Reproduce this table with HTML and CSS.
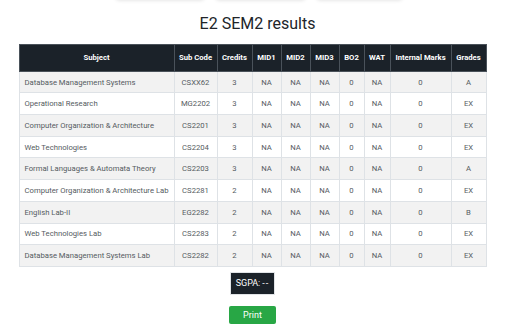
FILE: index.html
```html
<!DOCTYPE html>
<html>
<head>
<meta charset="utf-8">
<link rel="stylesheet" href="styles.css">
</head>
<body>
<div class="page">
  <div class="topbar">
    <div class="tab tab1"></div>
    <div class="tab tab2"></div>
    <div class="tab tab3"></div>
  </div>
  <h1 class="title">E2 SEM2 results</h1>
  <table class="results">
    <colgroup>
      <col class="c-subj"><col class="c-code"><col class="c-cred"><col class="c-mid"><col class="c-mid"><col class="c-mid"><col class="c-bo"><col class="c-wat"><col class="c-int"><col class="c-grade">
    </colgroup>
    <thead>
      <tr><th>Subject</th><th>Sub Code</th><th>Credits</th><th>MID1</th><th>MID2</th><th>MID3</th><th>BO2</th><th>WAT</th><th>Internal Marks</th><th>Grades</th></tr>
    </thead>
    <tbody>
      <tr><td class="subj">Database Management Systems</td><td>CSXX62</td><td>3</td><td>NA</td><td>NA</td><td>NA</td><td>0</td><td>NA</td><td>0</td><td>A</td></tr>
      <tr><td class="subj">Operational Research</td><td>MG2202</td><td>3</td><td>NA</td><td>NA</td><td>NA</td><td>0</td><td>NA</td><td>0</td><td>EX</td></tr>
      <tr><td class="subj">Computer Organization &amp; Architecture</td><td>CS2201</td><td>3</td><td>NA</td><td>NA</td><td>NA</td><td>0</td><td>NA</td><td>0</td><td>EX</td></tr>
      <tr><td class="subj">Web Technologies</td><td>CS2204</td><td>3</td><td>NA</td><td>NA</td><td>NA</td><td>0</td><td>NA</td><td>0</td><td>EX</td></tr>
      <tr><td class="subj">Formal Languages &amp; Automata Theory</td><td>CS2203</td><td>3</td><td>NA</td><td>NA</td><td>NA</td><td>0</td><td>NA</td><td>0</td><td>A</td></tr>
      <tr><td class="subj">Computer Organization &amp; Architecture Lab</td><td>CS2281</td><td>2</td><td>NA</td><td>NA</td><td>NA</td><td>0</td><td>NA</td><td>0</td><td>EX</td></tr>
      <tr><td class="subj">English Lab-II</td><td>EG2282</td><td>2</td><td>NA</td><td>NA</td><td>NA</td><td>0</td><td>NA</td><td>0</td><td>B</td></tr>
      <tr><td class="subj">Web Technologies Lab</td><td>CS2283</td><td>2</td><td>NA</td><td>NA</td><td>NA</td><td>0</td><td>NA</td><td>0</td><td>EX</td></tr>
      <tr><td class="subj">Database Management Systems Lab</td><td>CS2282</td><td>2</td><td>NA</td><td>NA</td><td>NA</td><td>0</td><td>NA</td><td>0</td><td>EX</td></tr>
    </tbody>
  </table>
  <div class="sgpa">SGPA: <span class="dashes">--</span></div>
  <button class="print">Print</button>
</div>
</body>
</html>
```
FILE: styles.css
```css
html, body {
  margin: 0;
  padding: 0;
  background: #ffffff;
}
body {
  font-family: Roboto, "Liberation Sans", sans-serif;
  color: #212529;
}
.page {
  width: 515px;
  height: 336px;
  overflow: hidden;
  display: flex;
  flex-direction: column;
  align-items: center;
}
.topbar {
  display: flex;
  gap: 12px;
  margin-top: -21px;
  height: 20px;
}
.tab {
  height: 20px;
  background: #ffffff;
  border-radius: 3px;
  box-shadow: 0 1px 4px rgba(0, 0, 0, 0.15);
}
.tab1 { width: 88px; margin-left: 3px; }
.tab2 { width: 89px; }
.tab3 { width: 85px; }
.title {
  margin: 15px 0 11px 0;
  font-size: 16px;
  font-weight: 400;
  line-height: 19px;
  color: #212529;
}
.results {
  width: 467px;
  margin-left: -10px;
  table-layout: fixed;
  border-collapse: collapse;
  font-size: 7.7px;
}
.c-subj { width: 155px; }
.c-code { width: 43px; }
.c-cred { width: 35px; }
.c-mid { width: 29px; }
.c-bo { width: 25px; }
.c-wat { width: 26px; }
.c-int { width: 61px; }
.c-grade { width: 35px; }
.results th {
  background: #1b2229;
  color: #ffffff;
  font-weight: 700;
  height: 25.7px;
  padding: 0 2px;
  border: 1px solid #4a525a;
  text-align: center;
  white-space: nowrap;
}
.results td {
  height: 20.7px;
  padding: 0 4px;
  border: 1px solid #dee2e6;
  color: #555b61;
  text-align: center;
  white-space: nowrap;
}
.results td.subj {
  text-align: left;
  padding-left: 5px;
}
.results tbody tr:nth-child(odd) td {
  background: #f2f2f2;
}
.sgpa {
  margin-top: 5px;
  margin-left: -10px;
  background: #1b2229;
  color: #ffffff;
  font-size: 9px;
  height: 21px;
  padding: 0 5px;
  display: flex;
  align-items: center;
  border: 1px solid #e1e4e7;
}
.dashes {
  margin-left: 2px;
  letter-spacing: 1px;
}
.print {
  margin-top: 11px;
  margin-left: -10px;
  background: #28a745;
  color: #ffffff;
  border: none;
  border-radius: 2px;
  font-family: Roboto, "Liberation Sans", sans-serif;
  font-size: 9px;
  width: 47px;
  height: 18px;
  padding: 0;
}
```
